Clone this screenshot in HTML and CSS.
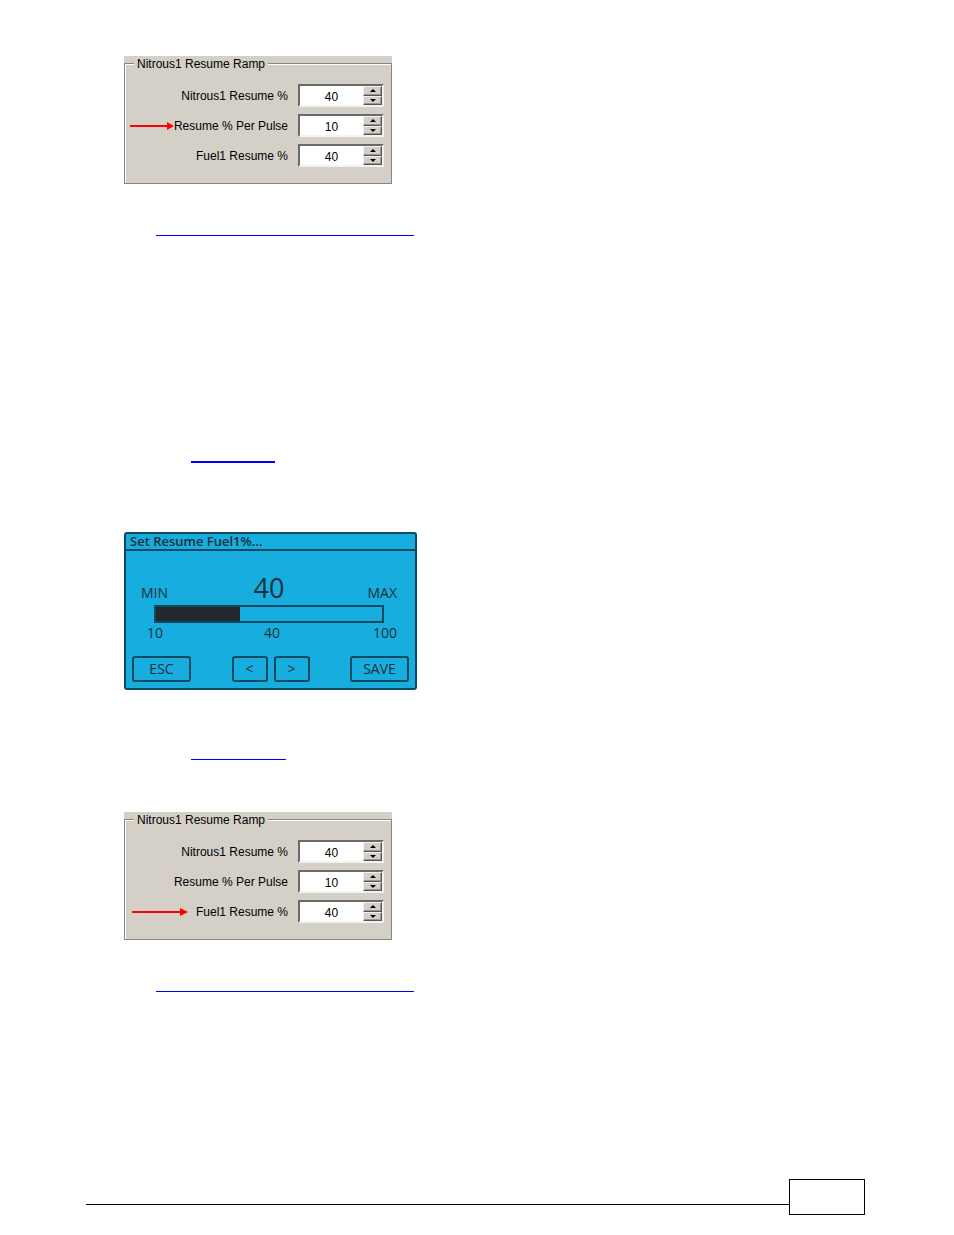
FILE: index.html
```
<!DOCTYPE html>
<html lang="en">
<head>
  <meta charset="UTF-8">
  <title>Nitrous1 Resume Ramp</title>
  <link rel="stylesheet" href="styles.css">
</head>
<body>
  <main class="page">
    <form class="panel">
      <fieldset class="group">
        <legend>Nitrous1 Resume Ramp</legend>
        <div class="row">
          <label for="nitrous-a">Nitrous1 Resume %</label>
          <div class="spinner">
            <input id="nitrous-a" type="text" inputmode="numeric" value="40">
            <div class="spin-buttons">
              <button type="button" class="up"></button>
              <button type="button" class="down"></button>
            </div>
          </div>
        </div>
        <div class="row">
          <svg class="arrow" width="44" height="8" viewBox="0 0 44 8"><path d="M0 3h37v-3l7 4l-7 4v-3h-37z" fill="#f00"/></svg>
          <label for="pulse-a">Resume % Per Pulse</label>
          <div class="spinner">
            <input id="pulse-a" type="text" inputmode="numeric" value="10">
            <div class="spin-buttons">
              <button type="button" class="up"></button>
              <button type="button" class="down"></button>
            </div>
          </div>
        </div>
        <div class="row">
          <label for="fuel-a">Fuel1 Resume %</label>
          <div class="spinner">
            <input id="fuel-a" type="text" inputmode="numeric" value="40">
            <div class="spin-buttons">
              <button type="button" class="up"></button>
              <button type="button" class="down"></button>
            </div>
          </div>
        </div>
      </fieldset>
    </form>

    <a href="#" class="rule rule-long"></a>
    <a href="#" class="rule rule-thick"></a>

    <section class="lcd">
      <h2 class="lcd-title">Set Resume Fuel1%...</h2>
      <div class="lcd-body">
        <div class="lcd-head">
          <span>MIN</span>
          <output class="lcd-value" for="fuel-level">40</output>
          <span class="right">MAX</span>
        </div>
        <input class="lcd-bar" id="fuel-level" type="range" min="10" max="100" value="40">
        <div class="lcd-scale">
          <label for="fuel-level">10</label>
          <span>40</span>
          <span class="right">100</span>
        </div>
      </div>
      <div class="lcd-buttons">
        <button type="button" class="wide">ESC</button>
        <div class="lcd-steps">
          <button type="button">&lt;</button>
          <button type="button">&gt;</button>
        </div>
        <button type="button" class="wide">SAVE</button>
      </div>
    </section>

    <a href="#" class="rule rule-short"></a>

    <form class="panel">
      <fieldset class="group">
        <legend>Nitrous1 Resume Ramp</legend>
        <div class="row">
          <label for="nitrous-b">Nitrous1 Resume %</label>
          <div class="spinner">
            <input id="nitrous-b" type="text" inputmode="numeric" value="40">
            <div class="spin-buttons">
              <button type="button" class="up"></button>
              <button type="button" class="down"></button>
            </div>
          </div>
        </div>
        <div class="row">
          <label for="pulse-b">Resume % Per Pulse</label>
          <div class="spinner">
            <input id="pulse-b" type="text" inputmode="numeric" value="10">
            <div class="spin-buttons">
              <button type="button" class="up"></button>
              <button type="button" class="down"></button>
            </div>
          </div>
        </div>
        <div class="row">
          <svg class="arrow arrow-long" width="56" height="8" viewBox="0 0 56 8"><path d="M0 3h48v-3l8 4l-8 4v-3h-48z" fill="#f00"/></svg>
          <label for="fuel-b">Fuel1 Resume %</label>
          <div class="spinner">
            <input id="fuel-b" type="text" inputmode="numeric" value="40">
            <div class="spin-buttons">
              <button type="button" class="up"></button>
              <button type="button" class="down"></button>
            </div>
          </div>
        </div>
      </fieldset>
    </form>

    <a href="#" class="rule rule-long"></a>
  </main>

  <footer class="footer">
    <div class="footer-line"></div>
    <div class="footer-box"></div>
  </footer>
</body>
</html>
```
FILE: styles.css
```
* {
  box-sizing: border-box;
}
body {
  margin: 0;
  background: #fff;
  color: #000;
  font-family: "Liberation Sans", Arial, sans-serif;
  font-size: 12px;
}
.page {
  display: flex;
  flex-direction: column;
  align-items: flex-start;
  padding: 56px 89px 0 124px;
}

/* group box with spinners */
.panel {
  width: 268px;
  background: #d4d0c8;
}
.group {
  margin: 0;
  padding: 14px 7px 16px 4px;
  border: 1px solid #868686;
  box-shadow: inset 1px 1px #fff;
  display: flex;
  flex-direction: column;
  gap: 7px;
}
.group legend {
  height: 14px;
  margin-left: 5px;
  padding: 0 3px;
  line-height: 16px;
  background: #d4d0c8;
}
.row {
  display: flex;
  align-items: center;
  justify-content: flex-end;
}
.row label {
  margin-right: 10px;
  line-height: 16px;
}
.arrow {
  flex: none;
}
.arrow-long {
  margin-right: 8px;
}
.spinner {
  display: flex;
  width: 86px;
  height: 23px;
  background: #fff;
  border: 2px solid;
  border-color: #6a6a6a #f4f2ee #f4f2ee #6a6a6a;
}
.spinner input {
  flex: 1;
  min-width: 0;
  padding: 2px 0 0;
  border: 0;
  background: none;
  font: inherit;
  text-align: center;
  outline: none;
}
.spin-buttons {
  display: flex;
  flex-direction: column;
  width: 19px;
}
.spin-buttons button {
  flex: 1;
  display: flex;
  align-items: center;
  justify-content: center;
  padding: 0;
  background: #d4d0c8;
  border: 1px solid;
  border-color: #f4f2ee #555 #555 #f4f2ee;
  box-shadow: inset -1px -1px #999;
}
.up::before,
.down::before {
  content: "";
  border: 3px solid transparent;
}
.up::before {
  border-top: 0;
  border-bottom-color: #000;
}
.down::before {
  border-bottom: 0;
  border-top-color: #000;
}

/* underlines */
.rule {
  display: block;
  border-bottom: 1px solid #00f;
}
.rule-long {
  width: 258px;
  margin: 51px 0 0 32px;
}
.rule-thick {
  width: 84px;
  margin: 225px 0 69px 67px;
  border-bottom-width: 2px;
}
.rule-short {
  width: 95px;
  margin: 69px 0 52px 67px;
}

/* touch screen */
.lcd {
  width: 293px;
  height: 158px;
  background: #17addf;
  border: 2px solid #104a60;
  border-radius: 3px;
  color: #1a3038;
  font-family: "Open Sans", "Noto Sans", sans-serif;
  font-size: 14px;
}
.lcd-title {
  margin: 0;
  padding-left: 4px;
  border-bottom: 2px solid #104a60;
  font-size: 13px;
  font-weight: 600;
  line-height: 15px;
}
.lcd-body {
  padding: 25px 18px 0 15px;
}
.lcd-head,
.lcd-scale {
  display: grid;
  grid-template-columns: 1fr auto 1fr;
  align-items: baseline;
}
.lcd-head {
  line-height: 24px;
}
.lcd-value {
  font-size: 27px;
}
.right {
  text-align: right;
}
.lcd-bar {
  display: block;
  appearance: none;
  width: 230px;
  height: 18px;
  margin: 0 0 0 13px;
  border: 2px solid #104a60;
  background: linear-gradient(to right, #22282b 37%, transparent 37%);
}
.lcd-bar::-webkit-slider-thumb {
  appearance: none;
  width: 0;
  height: 0;
}
.lcd-scale {
  padding-left: 6px;
  line-height: 20px;
}
.lcd-buttons {
  display: flex;
  justify-content: space-between;
  padding: 13px 6px 0;
}
.lcd-buttons button {
  width: 36px;
  height: 26px;
  padding: 0;
  background: none;
  border: 2px solid #104a60;
  border-radius: 3px;
  color: inherit;
  font: inherit;
  line-height: 20px;
}
.lcd-buttons .wide {
  width: 59px;
}
.lcd-steps {
  display: flex;
  gap: 6px;
}

.footer {
  display: flex;
  align-items: flex-end;
  padding: 187px 89px 20px 86px;
}
.footer-line {
  flex: 1;
  margin-bottom: 10px;
  border-bottom: 1px solid #000;
}
.footer-box {
  width: 76px;
  height: 36px;
  border: 1px solid #000;
}
```
